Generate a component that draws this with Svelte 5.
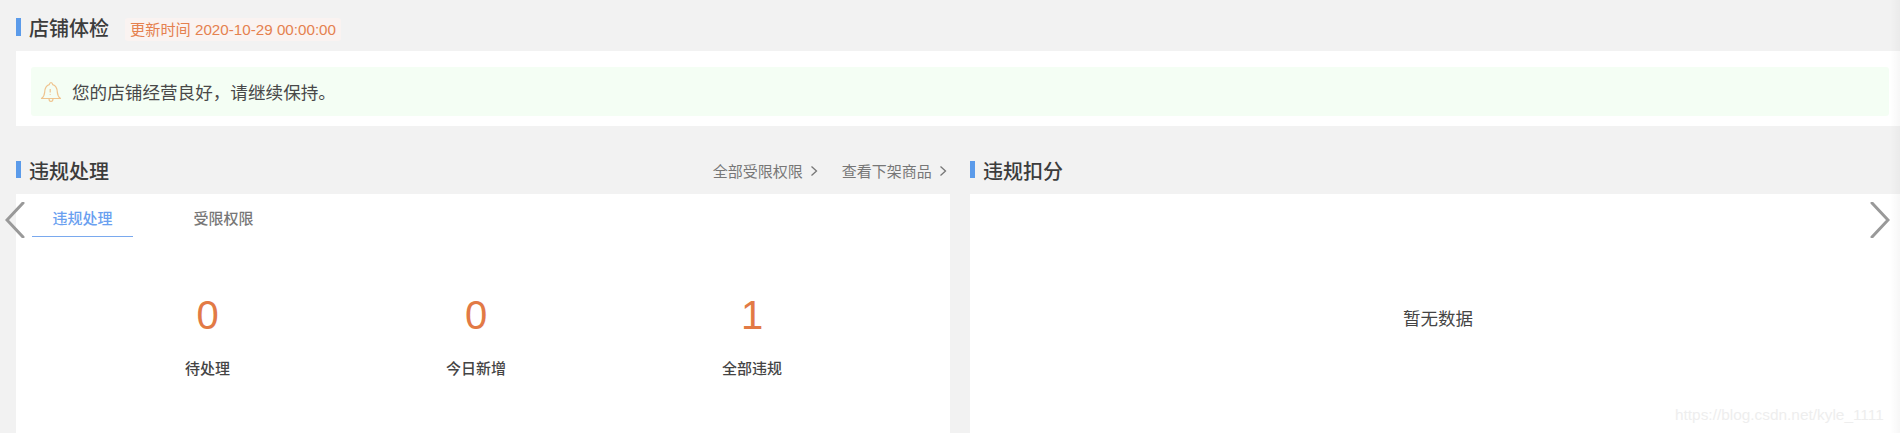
<script lang="ts">
  const stats = [
    { value: 0, label: '待处理' },
    { value: 0, label: '今日新增' },
    { value: 1, label: '全部违规' },
  ]
  const links = ['全部受限权限', '查看下架商品']
</script>

<div class="page">
  <section class="health">
    <div class="head health-head">
      <h2 class="title">店铺体检</h2>
      <span class="updated">更新时间 2020-10-29 00:00:00</span>
    </div>
    <div class="card notice-card">
      <div class="notice">
        <svg class="bell" width="22" height="22" viewBox="0 0 22 22" fill="none" stroke="#efc48f" stroke-width="1.2" stroke-linejoin="round">
          <path d="M1.5 17.5c2-1.4 3-3 3.2-6.5.2-4 1.8-6.6 4.6-7.4C9.5 2.3 10 1.6 11 1.6s1.500.7 1.700 2c2.800.8 4.400 3.400 4.600 7.400.2 3.500 1.200 5.100 3.200 6.500z" />
          <path d="M9 17.500c0 2 1 3 2 3s2-1 2-3" />
          <path d="M10.200 8v3.500M10.200 13v.8" />
        </svg>
        <span>您的店铺经营良好，请继续保持。</span>
      </div>
    </div>
  </section>

  <div class="columns">
    <section>
      <div class="head">
        <h2 class="title">违规处理</h2>
        <div class="links">
          {#each links as link}
            <span class="link">
              {link}
              <svg width="8" height="12" viewBox="0 0 8 12" fill="none" stroke="#777" stroke-width="1.300"><path d="M1.500 1.500 6.500 6l-5 4.500" /></svg>
            </span>
          {/each}
        </div>
      </div>
      <div class="card panel">
        <div class="tabs">
          <span class="tab active">违规处理</span>
          <span class="tab">受限权限</span>
        </div>
        <div class="stats">
          {#each stats as stat}
            <div class="stat">
              <div class="value">{stat.value}</div>
              <div class="label">{stat.label}</div>
            </div>
          {/each}
        </div>
      </div>
    </section>

    <section>
      <div class="head">
        <h2 class="title">违规扣分</h2>
      </div>
      <div class="card panel empty">暂无数据</div>
    </section>
  </div>

  <svg class="arrow prev" width="20" height="36" viewBox="0 0 20 36" fill="none" stroke="#999" stroke-width="3" stroke-linecap="round"><path d="M18 1 2 18l16 17" /></svg>
  <svg class="arrow next" width="20" height="36" viewBox="0 0 20 36" fill="none" stroke="#999" stroke-width="3" stroke-linecap="round"><path d="M2 1l16 17L2 35" /></svg>
  <span class="watermark">https://blog.csdn.net/kyle_1111</span>
  <div class="edge"></div>
</div>

<style>
  :global(body) {
    margin: 0;
    overflow: hidden;
    background: #f2f2f2;
  }

  .page {
    position: relative;
    height: 433px;
    overflow: hidden;
    box-sizing: border-box;
    padding: 0 0 0 16px;
    background: #f2f2f2;
    color: #333;
    font-family: "Liberation Sans", "Noto Sans CJK SC", sans-serif;
  }

  .head {
    display: flex;
    align-items: center;
    justify-content: space-between;
    box-sizing: border-box;
    height: 41px;
    padding: 0 0 3px 13px;
    position: relative;
  }

  .head::before {
    content: '';
    position: absolute;
    left: 0;
    top: 8px;
    width: 5px;
    height: 17px;
    background: #5b9bea;
  }

  .health-head {
    justify-content: flex-start;
    padding: 17px 0 0 13px;
    gap: 16px;
  }

  .health-head::before {
    top: 18px;
    height: 18px;
  }

  .title {
    margin: 0;
    font-size: 20px;
    font-weight: 500;
    line-height: 28px;
    color: #3c3c3c;
  }

  .updated {
    padding: 0 5px;
    height: 23px;
    line-height: 23px;
    font-size: 15.200px;
    color: #e5814f;
    background: #faf3f1;
    border-radius: 3px;
  }

  .card {
    background: #fff;
  }

  .notice-card {
    margin-top: 10px;
    height: 75px;
    box-sizing: border-box;
    padding: 16px 11px 10px 15px;
  }

  .notice {
    display: flex;
    align-items: center;
    gap: 10px;
    height: 49px;
    padding-left: 9px;
    background: #f4fef4;
    border-radius: 3px;
    font-size: 17.600px;
    color: #484848;
  }

  .columns {
    display: grid;
    grid-template-columns: 934px 1fr;
    gap: 20px;
    margin-top: 27px;
  }

  .links {
    display: flex;
    gap: 24px;
    font-size: 15px;
    color: #777;
    margin: -3px 3px 0 0;
  }

  .link svg {
    margin-left: 3px;
  }

  .panel {
    height: 240px;
  }

  .tabs {
    display: flex;
    padding: 0 0 0 16px;
    height: 43px;
  }

  .tab {
    width: 101px;
    box-sizing: border-box;
    padding-top: 14px;
    margin-right: 40px;
    font-size: 15px;
    font-weight: 500;
    line-height: 22px;
    text-align: center;
    color: #777;
  }

  .tab.active {
    color: #6aa0f0;
    border-bottom: 1.500px solid #7aa9ee;
  }

  .stats {
    display: flex;
    gap: 216px;
    padding: 55px 0 0 169px;
  }

  .stat {
    text-align: center;
  }

  .value {
    font-size: 40px;
    line-height: 46px;
    color: #e27a45;
  }

  .label {
    margin-top: 20px;
    font-size: 15px;
    font-weight: 500;
    line-height: 22px;
    color: #444;
  }

  .empty {
    display: flex;
    justify-content: center;
    padding: 111px 0 0 6px;
    box-sizing: border-box;
    font-size: 17.500px;
    line-height: 28px;
    color: #444;
  }

  .arrow {
    position: absolute;
    top: 202px;
  }

  .prev {
    left: 5px;
  }

  .next {
    left: 1870px;
  }

  .watermark {
    position: absolute;
    left: 1675px;
    top: 404px;
    font-size: 15.400px;
    line-height: 22px;
    color: #eee;
  }

  .edge {
    position: absolute;
    top: 0;
    right: 0;
    bottom: 0;
    width: 10px;
    background: linear-gradient(to right, rgba(0, 0, 0, 0), rgba(0, 0, 0, 0.03));
  }
</style>
